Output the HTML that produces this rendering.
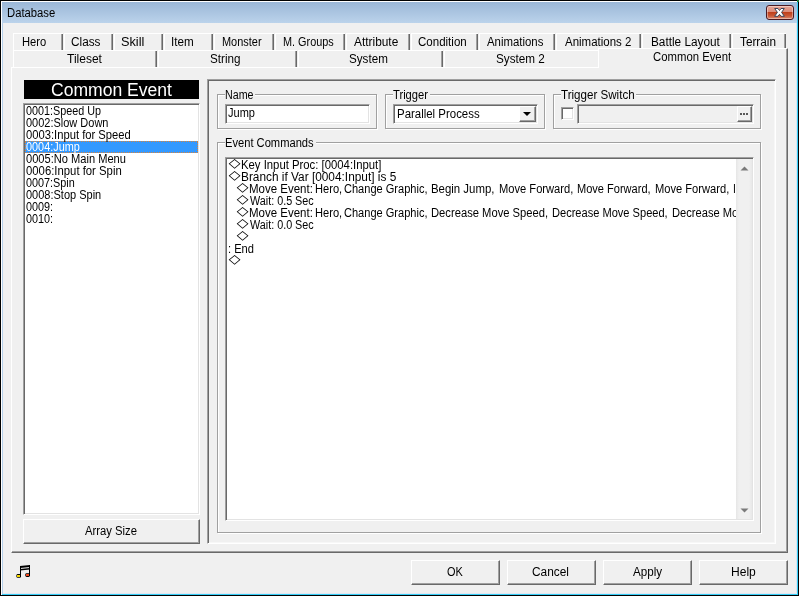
<!DOCTYPE html>
<html><head><meta charset="utf-8"><title>Database</title>
<style>
html,body{margin:0;padding:0;}
body{width:799px;height:596px;position:relative;overflow:hidden;background:#f0f0f0;font-family:"Liberation Sans",sans-serif;font-size:12px;color:#000;}
.a{position:absolute;box-sizing:border-box;}
.t{position:absolute;white-space:pre;transform-origin:0 50%;display:block;}
.tab{position:absolute;box-sizing:border-box;height:17px;top:33px;border-left:1px solid #fff;border-top:1px solid #fff;}
.tab:after{content:"";position:absolute;right:0;top:0;bottom:0;width:1px;background:#696969;}
.tab:before{content:"";position:absolute;right:1px;top:0;bottom:0;width:1px;background:#a0a0a0;}
.tab2{top:50px;height:17px;}
.btn{position:absolute;box-sizing:border-box;border:1px solid;border-color:#fff #696969 #696969 #fff;box-shadow:inset -1px -1px 0 #a0a0a0, inset 1px 1px 0 #f0f0f0;background:#f0f0f0;}
.grp{position:absolute;box-sizing:border-box;border:1px solid #a0a0a0;box-shadow:1px 1px 0 #fff, inset 1px 1px 0 #fff;}
.lbl{position:absolute;background:#f0f0f0;height:12px;top:-6px;}
.sunk{position:absolute;box-sizing:border-box;border:1px solid;border-color:#a0a0a0 #fff #fff #a0a0a0;box-shadow:inset 1px 1px 0 #696969, inset -1px -1px 0 #e3e3e3;background:#fff;}
</style></head><body><div id="w" style="position:absolute;left:0;top:0;width:799px;height:596px;will-change:transform;">
<!-- frame -->
<div class="a" style="left:0;top:0;width:799px;height:596px;background:#000;"></div>
<div class="a" style="left:1px;top:1px;width:797px;height:594px;background:#fff;"></div>
<div class="a" style="left:2px;top:2px;width:796px;height:593px;background:#35cdf5;"></div>
<div class="a" style="left:2px;top:2px;width:795px;height:592px;background:linear-gradient(#9bb7d7,#bbd3eb 21px,#b4cfea 22px,#b4cfea);"></div>
<div class="a" style="left:3px;top:23px;width:793px;height:570px;background:#f0f0f0;"></div>
<div class="a" style="left:796px;top:23px;width:1px;height:571px;background:#d9e4f1;"></div>
<div class="a" style="left:3px;top:593px;width:794px;height:1px;background:#dfe6f3;"></div>
<div class="a" style="left:797px;top:0;width:2px;height:2px;background:#1d7a30;"></div>
<!-- close -->
<div class="a" style="left:766px;top:5px;width:28px;height:15px;border:1px solid #4a1a22;border-radius:3px;background:linear-gradient(#e7a596 0,#db8b79 46%,#bf401c 50%,#c95735 75%,#d98a72 100%);box-shadow:inset 0 0 0 1px rgba(255,255,255,.4);"></div>
<svg class="a" style="left:773px;top:7px" width="14" height="11" viewBox="0 0 14 11"><path d="M1.7 1.5 L5 1.5 L6.5 3.5 L8 1.5 L11.3 1.5 L8.6 5.4 L11.4 9.3 L8 9.3 L6.5 7.3 L5 9.3 L1.6 9.3 L4.4 5.4 Z" fill="#fff" stroke="#3c4458" stroke-width="1" stroke-linejoin="round"/></svg>

<!-- tabs row 1 -->
<div class="tab" style="left:13px;width:50px;"></div>
<div class="tab" style="left:64px;width:49px;"></div>
<div class="tab" style="left:114px;width:49px;"></div>
<div class="tab" style="left:164px;width:49px;"></div>
<div class="tab" style="left:214px;width:60px;"></div>
<div class="tab" style="left:275px;width:70px;"></div>
<div class="tab" style="left:346px;width:64px;"></div>
<div class="tab" style="left:411px;width:67px;"></div>
<div class="tab" style="left:479px;width:76px;"></div>
<div class="tab" style="left:556px;width:85px;"></div>
<div class="tab" style="left:642px;width:89px;"></div>
<div class="tab" style="left:732px;width:54px;"></div>
<!-- tabs row 2 -->
<div class="tab tab2" style="left:13px;width:144px;"></div>
<div class="tab tab2" style="left:158px;width:139px;"></div>
<div class="tab tab2" style="left:298px;width:145px;"></div>
<div class="tab tab2" style="left:444px;width:157px;"></div>
<!-- pane -->
<div class="a" style="left:11px;top:67px;width:777px;height:486px;border:1px solid;border-color:#fff #696969 #696969 #fff;box-shadow:inset -1px -1px 0 #a0a0a0;"></div>
<!-- selected tab -->
<div class="a" style="left:598px;top:48px;width:190px;height:20px;background:#f0f0f0;border-left:1px solid #fff;border-top:1px solid #fff;border-right:1px solid #696969;box-shadow:inset -1px 0 0 #a0a0a0;"></div>

<!-- left panel -->
<div class="a" style="left:24px;top:80px;width:175px;height:19px;background:#000;"></div>
<div class="sunk" style="left:23px;top:103px;width:177px;height:412px;">
<div class="a" style="left:1px;top:37px;width:173px;height:12px;background:#3399ff;outline:1px dotted #d8843c;outline-offset:-1px;"></div>
</div>
<div class="btn" style="left:23px;top:519px;width:177px;height:25px;"></div>

<!-- right panel -->
<div class="a" style="left:207px;top:79px;width:569px;height:465px;border:1px solid;border-color:#a0a0a0 #fff #fff #a0a0a0;box-shadow:inset 1px 1px 0 #696969, inset -1px -1px 0 #f7f7f7;"></div>
<div class="grp" style="left:217px;top:94px;width:160px;height:35px;"><div class="lbl" style="left:7px;width:30px;"></div></div>
<div class="sunk" style="left:225px;top:104px;width:145px;height:20px;"></div>
<div class="grp" style="left:385px;top:94px;width:160px;height:35px;"><div class="lbl" style="left:7px;width:37px;"></div></div>
<div class="sunk" style="left:393px;top:104px;width:145px;height:20px;">
<div class="btn" style="right:1px;top:1px;width:17px;height:16px;"><div class="a" style="left:3px;top:5px;width:0;height:0;border:4px solid transparent;border-top:4px solid #000;border-bottom:0;"></div></div></div>
<div class="grp" style="left:553px;top:94px;width:208px;height:35px;"><div class="lbl" style="left:7px;width:75px;"></div></div>
<div class="sunk" style="left:561px;top:107px;width:13px;height:13px;"></div>
<div class="sunk" style="left:577px;top:104px;width:177px;height:20px;background:#f0f0f0;">
<div class="btn" style="right:1px;top:1px;width:15px;height:16px;"><div class="a" style="left:2px;top:6px;width:2px;height:2px;background:#585858;box-shadow:3px 0 0 #585858,6px 0 0 #585858;"></div></div></div>

<div class="grp" style="left:217px;top:142px;width:544px;height:391px;"><div class="lbl" style="left:7px;width:91px;"></div></div>
<div class="sunk" style="left:225px;top:157px;width:529px;height:364px;">
<div class="a" style="left:1px;top:1px;width:509px;height:360px;overflow:hidden;">
<span class="t" style="left:0.92px;top:-6.0px;font-size:11px;line-height:22px;height:22px;color:#000;font-family:'Liberation Sans','IPAGothic',sans-serif;transform:scaleX(1.1986);">◇</span>
<span class="t" style="left:13.86px;top:-6.0px;font-size:12px;line-height:24px;height:24px;color:#000;font-family:'Liberation Sans',sans-serif;transform:scaleX(0.9438);">Key Input Proc: [0004:Input]</span>
<span class="t" style="left:0.92px;top:6.0px;font-size:11px;line-height:22px;height:22px;color:#000;font-family:'Liberation Sans','IPAGothic',sans-serif;transform:scaleX(1.1986);">◇</span>
<span class="t" style="left:13.82px;top:6.0px;font-size:12px;line-height:24px;height:24px;color:#000;font-family:'Liberation Sans',sans-serif;transform:scaleX(0.9874);">Branch if Var [0004:Input] is 5</span>
<span class="t" style="left:9.02px;top:18.0px;font-size:11px;line-height:22px;height:22px;color:#000;font-family:'Liberation Sans','IPAGothic',sans-serif;transform:scaleX(1.1986);">◇</span>
<span class="t" style="left:22.45px;top:18.0px;font-size:12px;line-height:24px;height:24px;color:#000;font-family:'Liberation Sans',sans-serif;transform:scaleX(0.9570);">Move Event:</span>
<span class="t" style="left:88.38px;top:18.0px;font-size:12px;line-height:24px;height:24px;color:#000;font-family:'Liberation Sans',sans-serif;transform:scaleX(0.9248);">Hero,</span>
<span class="t" style="left:117.39px;top:18.0px;font-size:12px;line-height:24px;height:24px;color:#000;font-family:'Liberation Sans',sans-serif;transform:scaleX(0.9204);">Change Graphic,</span>
<span class="t" style="left:9.02px;top:42.0px;font-size:11px;line-height:22px;height:22px;color:#000;font-family:'Liberation Sans','IPAGothic',sans-serif;transform:scaleX(1.1986);">◇</span>
<span class="t" style="left:22.45px;top:42.0px;font-size:12px;line-height:24px;height:24px;color:#000;font-family:'Liberation Sans',sans-serif;transform:scaleX(0.9570);">Move Event:</span>
<span class="t" style="left:88.38px;top:42.0px;font-size:12px;line-height:24px;height:24px;color:#000;font-family:'Liberation Sans',sans-serif;transform:scaleX(0.9248);">Hero,</span>
<span class="t" style="left:117.39px;top:42.0px;font-size:12px;line-height:24px;height:24px;color:#000;font-family:'Liberation Sans',sans-serif;transform:scaleX(0.9204);">Change Graphic,</span>
<span class="t" style="left:204.36px;top:18.0px;font-size:12px;line-height:24px;height:24px;color:#000;font-family:'Liberation Sans',sans-serif;transform:scaleX(0.9507);">Begin Jump,</span>
<span class="t" style="left:271.68px;top:18.0px;font-size:12px;line-height:24px;height:24px;color:#000;font-family:'Liberation Sans',sans-serif;transform:scaleX(0.9288);">Move Forward,</span>
<span class="t" style="left:350.18px;top:18.0px;font-size:12px;line-height:24px;height:24px;color:#000;font-family:'Liberation Sans',sans-serif;transform:scaleX(0.9199);">Move Forward,</span>
<span class="t" style="left:427.88px;top:18.0px;font-size:12px;line-height:24px;height:24px;color:#000;font-family:'Liberation Sans',sans-serif;transform:scaleX(0.9276);">Move Forward,</span>
<span class="t" style="left:506.40px;top:18.0px;font-size:12px;line-height:24px;height:24px;color:#000;font-family:'Liberation Sans',sans-serif;transform:scaleX(0.8571);">I</span>
<span class="t" style="left:204.37px;top:42.0px;font-size:12px;line-height:24px;height:24px;color:#000;font-family:'Liberation Sans',sans-serif;transform:scaleX(0.9339);">Decrease Move Speed,</span>
<span class="t" style="left:324.78px;top:42.0px;font-size:12px;line-height:24px;height:24px;color:#000;font-family:'Liberation Sans',sans-serif;transform:scaleX(0.9225);">Decrease Move Speed,</span>
<span class="t" style="left:444.78px;top:42.0px;font-size:12px;line-height:24px;height:24px;color:#000;font-family:'Liberation Sans',sans-serif;transform:scaleX(0.9282);">Decrease Mo</span>
<span class="t" style="left:9.02px;top:30.0px;font-size:11px;line-height:22px;height:22px;color:#000;font-family:'Liberation Sans','IPAGothic',sans-serif;transform:scaleX(1.1986);">◇</span>
<span class="t" style="left:22.55px;top:30.0px;font-size:12px;line-height:24px;height:24px;color:#000;font-family:'Liberation Sans',sans-serif;transform:scaleX(0.8982);">Wait: 0.5 Sec</span>
<span class="t" style="left:9.02px;top:54.0px;font-size:11px;line-height:22px;height:22px;color:#000;font-family:'Liberation Sans','IPAGothic',sans-serif;transform:scaleX(1.1986);">◇</span>
<span class="t" style="left:22.55px;top:54.0px;font-size:12px;line-height:24px;height:24px;color:#000;font-family:'Liberation Sans',sans-serif;transform:scaleX(0.8982);">Wait: 0.0 Sec</span>
<span class="t" style="left:9.02px;top:66.0px;font-size:11px;line-height:22px;height:22px;color:#000;font-family:'Liberation Sans','IPAGothic',sans-serif;transform:scaleX(1.1986);">◇</span>
<span class="t" style="left:0.74px;top:78.0px;font-size:12px;line-height:24px;height:24px;color:#000;font-family:'Liberation Sans',sans-serif;transform:scaleX(0.9266);">: End</span>
<span class="t" style="left:0.92px;top:90.0px;font-size:11px;line-height:22px;height:22px;color:#000;font-family:'Liberation Sans','IPAGothic',sans-serif;transform:scaleX(1.1986);">◇</span>

</div>
<div class="a" style="left:510px;top:1px;width:16px;height:360px;background:linear-gradient(90deg,#e6e6e6,#f0f0f0 3px,#f0f0f0 13px,#e8e8e8);">
<svg class="a" style="left:4px;top:7px" width="9" height="5" viewBox="0 0 9 5"><path d="M0.5 4.6 L4.5 0.4 L8.5 4.6 Z" fill="#7a7a7a"/></svg>
<svg class="a" style="left:4px;bottom:6px" width="9" height="5" viewBox="0 0 9 5"><path d="M0.5 0.4 L4.5 4.6 L8.5 0.4 Z" fill="#7a7a7a"/></svg>
</div>
</div>

<!-- bottom buttons -->
<div class="btn" style="left:411px;top:560px;width:89px;height:25px;"></div>
<div class="btn" style="left:507px;top:560px;width:89px;height:25px;"></div>
<div class="btn" style="left:603px;top:560px;width:89px;height:25px;"></div>
<div class="btn" style="left:699px;top:560px;width:89px;height:25px;"></div>
<!-- music icon -->
<svg class="a" style="left:16px;top:564px" width="16" height="15" viewBox="0 0 16 15" >
<rect x="4" y="2" width="1" height="10" fill="#000"/><rect x="13" y="1" width="1" height="10" fill="#000"/>
<path d="M4 2 L14 1 L14 3 L4 4 Z M4 5 L14 4 L14 5.5 L4 6.5 Z" fill="#000" shape-rendering="auto"/>
<rect x="0.4" y="10" width="4.6" height="3.8" fill="#000" rx="1.4"/><rect x="1" y="11" width="3" height="2" fill="#f5d800"/>
<rect x="9.3" y="9.2" width="4.7" height="3.8" fill="#000" rx="1.4"/><rect x="10" y="10" width="3" height="2" fill="#f04a20"/>
</svg>
<span class="t" style="left:6.77px;top:1.0px;font-size:12px;line-height:24px;height:24px;color:#000;font-family:'Liberation Sans',sans-serif;transform:scaleX(0.9399);">Database</span>
<span class="t" style="left:22.07px;top:30.0px;font-size:12px;line-height:24px;height:24px;color:#000;font-family:'Liberation Sans',sans-serif;transform:scaleX(0.9313);">Hero</span>
<span class="t" style="left:71.05px;top:30.0px;font-size:12px;line-height:24px;height:24px;color:#000;font-family:'Liberation Sans',sans-serif;transform:scaleX(0.9822);">Class</span>
<span class="t" style="left:120.85px;top:30.0px;font-size:12px;line-height:24px;height:24px;color:#000;font-family:'Liberation Sans',sans-serif;transform:scaleX(1.0613);">Skill</span>
<span class="t" style="left:171.09px;top:30.0px;font-size:12px;line-height:24px;height:24px;color:#000;font-family:'Liberation Sans',sans-serif;transform:scaleX(0.9728);">Item</span>
<span class="t" style="left:222.29px;top:30.0px;font-size:12px;line-height:24px;height:24px;color:#000;font-family:'Liberation Sans',sans-serif;transform:scaleX(0.9125);">Monster</span>
<span class="t" style="left:282.80px;top:30.0px;font-size:12px;line-height:24px;height:24px;color:#000;font-family:'Liberation Sans',sans-serif;transform:scaleX(0.9052);">M. Groups</span>
<span class="t" style="left:354.38px;top:30.0px;font-size:12px;line-height:24px;height:24px;color:#000;font-family:'Liberation Sans',sans-serif;transform:scaleX(0.9903);">Attribute</span>
<span class="t" style="left:417.97px;top:30.0px;font-size:12px;line-height:24px;height:24px;color:#000;font-family:'Liberation Sans',sans-serif;transform:scaleX(0.9605);">Condition</span>
<span class="t" style="left:487.39px;top:30.0px;font-size:12px;line-height:24px;height:24px;color:#000;font-family:'Liberation Sans',sans-serif;transform:scaleX(0.9502);">Animations</span>
<span class="t" style="left:564.69px;top:30.0px;font-size:12px;line-height:24px;height:24px;color:#000;font-family:'Liberation Sans',sans-serif;transform:scaleX(0.9560);">Animations 2</span>
<span class="t" style="left:650.53px;top:30.0px;font-size:12px;line-height:24px;height:24px;color:#000;font-family:'Liberation Sans',sans-serif;transform:scaleX(0.9833);">Battle Layout</span>
<span class="t" style="left:740.38px;top:30.0px;font-size:12px;line-height:24px;height:24px;color:#000;font-family:'Liberation Sans',sans-serif;transform:scaleX(0.9808);">Terrain</span>
<span class="t" style="left:66.57px;top:47.0px;font-size:12px;line-height:24px;height:24px;color:#000;font-family:'Liberation Sans',sans-serif;transform:scaleX(1.0010);">Tileset</span>
<span class="t" style="left:209.92px;top:47.0px;font-size:12px;line-height:24px;height:24px;color:#000;font-family:'Liberation Sans',sans-serif;transform:scaleX(0.9726);">String</span>
<span class="t" style="left:348.92px;top:47.0px;font-size:12px;line-height:24px;height:24px;color:#000;font-family:'Liberation Sans',sans-serif;transform:scaleX(0.9709);">System</span>
<span class="t" style="left:495.92px;top:47.0px;font-size:12px;line-height:24px;height:24px;color:#000;font-family:'Liberation Sans',sans-serif;transform:scaleX(0.9769);">System 2</span>
<span class="t" style="left:652.78px;top:45.0px;font-size:12px;line-height:24px;height:24px;color:#000;font-family:'Liberation Sans',sans-serif;transform:scaleX(0.9448);">Common Event</span>
<span class="t" style="left:50.97px;top:72.0px;font-size:18px;line-height:36px;height:36px;color:#fff;font-family:'Liberation Sans',sans-serif;transform:scaleX(0.9753);">Common Event</span>
<span class="t" style="left:26.42px;top:99.0px;font-size:12px;line-height:24px;height:24px;color:#000;font-family:'Liberation Sans',sans-serif;transform:scaleX(0.8985);">0001:Speed Up</span>
<span class="t" style="left:26.41px;top:111.0px;font-size:12px;line-height:24px;height:24px;color:#000;font-family:'Liberation Sans',sans-serif;transform:scaleX(0.9152);">0002:Slow Down</span>
<span class="t" style="left:26.40px;top:123.0px;font-size:12px;line-height:24px;height:24px;color:#000;font-family:'Liberation Sans',sans-serif;transform:scaleX(0.9350);">0003:Input for Speed</span>
<span class="t" style="left:26.42px;top:135.0px;font-size:12px;line-height:24px;height:24px;color:#fff;font-family:'Liberation Sans',sans-serif;transform:scaleX(0.9064);">0004:Jump</span>
<span class="t" style="left:26.41px;top:147.0px;font-size:12px;line-height:24px;height:24px;color:#000;font-family:'Liberation Sans',sans-serif;transform:scaleX(0.9251);">0005:No Main Menu</span>
<span class="t" style="left:26.40px;top:159.0px;font-size:12px;line-height:24px;height:24px;color:#000;font-family:'Liberation Sans',sans-serif;transform:scaleX(0.9437);">0006:Input for Spin</span>
<span class="t" style="left:26.42px;top:171.0px;font-size:12px;line-height:24px;height:24px;color:#000;font-family:'Liberation Sans',sans-serif;transform:scaleX(0.9025);">0007:Spin</span>
<span class="t" style="left:26.41px;top:183.0px;font-size:12px;line-height:24px;height:24px;color:#000;font-family:'Liberation Sans',sans-serif;transform:scaleX(0.9167);">0008:Stop Spin</span>
<span class="t" style="left:26.42px;top:195.0px;font-size:12px;line-height:24px;height:24px;color:#000;font-family:'Liberation Sans',sans-serif;transform:scaleX(0.9014);">0009:</span>
<span class="t" style="left:26.42px;top:207.0px;font-size:12px;line-height:24px;height:24px;color:#000;font-family:'Liberation Sans',sans-serif;transform:scaleX(0.9014);">0010:</span>
<span class="t" style="left:85.20px;top:519.0px;font-size:12px;line-height:24px;height:24px;color:#000;font-family:'Liberation Sans',sans-serif;transform:scaleX(0.9401);">Array Size</span>
<span class="t" style="left:225.01px;top:83.0px;font-size:12px;line-height:24px;height:24px;color:#000;font-family:'Liberation Sans',sans-serif;transform:scaleX(0.8901);">Name</span>
<span class="t" style="left:228.27px;top:101.0px;font-size:12px;line-height:24px;height:24px;color:#000;font-family:'Liberation Sans',sans-serif;transform:scaleX(0.9182);">Jump</span>
<span class="t" style="left:393.20px;top:83.0px;font-size:12px;line-height:24px;height:24px;color:#000;font-family:'Liberation Sans',sans-serif;transform:scaleX(0.9310);">Trigger</span>
<span class="t" style="left:396.85px;top:102.0px;font-size:12px;line-height:24px;height:24px;color:#000;font-family:'Liberation Sans',sans-serif;transform:scaleX(0.9536);">Parallel Process</span>
<span class="t" style="left:560.99px;top:83.0px;font-size:12px;line-height:24px;height:24px;color:#000;font-family:'Liberation Sans',sans-serif;transform:scaleX(0.9661);">Trigger Switch</span>
<span class="t" style="left:224.98px;top:131.0px;font-size:12px;line-height:24px;height:24px;color:#000;font-family:'Liberation Sans',sans-serif;transform:scaleX(0.9292);">Event Commands</span>
<span class="t" style="left:447.15px;top:560.0px;font-size:12px;line-height:24px;height:24px;color:#000;font-family:'Liberation Sans',sans-serif;transform:scaleX(0.9116);">OK</span>
<span class="t" style="left:532.35px;top:560.0px;font-size:12px;line-height:24px;height:24px;color:#000;font-family:'Liberation Sans',sans-serif;transform:scaleX(0.9899);">Cancel</span>
<span class="t" style="left:632.69px;top:560.0px;font-size:12px;line-height:24px;height:24px;color:#000;font-family:'Liberation Sans',sans-serif;transform:scaleX(0.9687);">Apply</span>
<span class="t" style="left:730.61px;top:560.0px;font-size:12px;line-height:24px;height:24px;color:#000;font-family:'Liberation Sans',sans-serif;transform:scaleX(1.0048);">Help</span>

</div></body></html>
